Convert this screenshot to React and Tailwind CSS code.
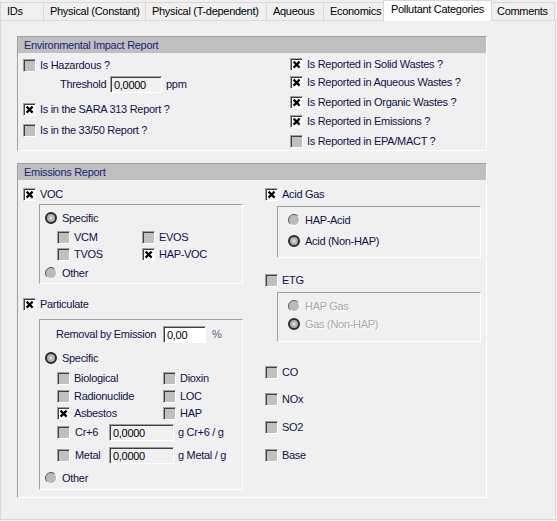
const tabs = [
  { label: 'IDs', w: 'w-[43px]' },
  { label: 'Physical (Constant)', w: 'w-[102px]' },
  { label: 'Physical (T-dependent)', w: 'w-[121px]' },
  { label: 'Aqueous', w: 'w-[57px]' },
  { label: 'Economics', w: 'w-[62px] border-r' },
  { label: 'Pollutant Categories', active: true },
  { label: 'Comments', w: 'w-[65px] border-r' },
];

const Check = ({ on }) => (
  <span
    className={`w-[13px] h-[13px] shrink-0 border border-t-[#a0a0a0] border-l-[#a0a0a0] border-b-white border-r-white shadow-[inset_1px_1px_0_#404040] flex items-center justify-center ${on ? 'bg-white' : 'bg-[#c0c0c0]'}`}
  >
    {on && (
      <svg width="11" height="11" viewBox="0 0 11 11">
        <path d="M2.6 2.6 L8.6 8.6 M8.6 2.6 L2.6 8.6" stroke="#000" strokeWidth="2.2" />
      </svg>
    )}
  </span>
);

const Radio = ({ on }) =>
  on ? (
    <svg width="12" height="12" viewBox="0 0 12 12" className="shrink-0">
      <circle cx="6" cy="6" r="5" fill="#b0b0b0" stroke="#2a2a2a" strokeWidth="2" />
      <circle cx="6" cy="6" r="1.8" fill="#d8d8d8" />
    </svg>
  ) : (
    <svg width="12" height="12" viewBox="0 0 12 12" className="shrink-0">
      <circle cx="6" cy="6" r="5.5" fill="#bababa" />
      <path d="M2.1 9.9 A5.5 5.5 0 0 1 9.9 2.1" fill="none" stroke="#5a5a5a" />
      <path d="M9.9 2.1 A5.5 5.5 0 0 1 2.1 9.9" fill="none" stroke="#ffffff" />
    </svg>
  );

const Field = ({ value, className }) => (
  <span
    className={`h-[17px] shrink-0 border border-t-[#a0a0a0] border-l-[#a0a0a0] border-b-white border-r-white shadow-[inset_1px_1px_0_#404040] pl-[3px] pt-px flex items-center text-black ${className}`}
  >
    {value}
  </span>
);

const CheckRow = ({ on, label, className = '' }) => (
  <div className={`h-[16px] flex items-center gap-[4px] whitespace-nowrap ${className}`}>
    <Check on={on} />
    <span>{label}</span>
  </div>
);

const RadioRow = ({ on, label, className = '', dim }) => (
  <div className={`h-[16px] flex items-center gap-[5px] whitespace-nowrap ${className}`}>
    <Radio on={on} />
    <span className={dim ? 'text-[#a8a8a8] [text-shadow:1px_1px_0_#fff]' : ''}>{label}</span>
  </div>
);

const Frame = ({ title, className, children }) => (
  <div className={`w-[470px] flex flex-col border border-t-[#a0a0a0] border-l-[#a0a0a0] border-b-white border-r-white ${className}`}>
    <div className="h-[16px] bg-[#bfbfbf] pl-[6px] flex items-center text-[#1c1c78]">{title}</div>
    <div className="flex flex-1">{children}</div>
  </div>
);

const Group = ({ className, children }) => (
  <div className={`w-[204px] flex flex-col border border-t-[#a0a0a0] border-l-[#a0a0a0] border-b-white border-r-white ${className}`}>
    {children}
  </div>
);

export default function App() {
  return (
    <div className="w-[557px] h-[521px] bg-[#f0f0f0] overflow-hidden font-['Liberation_Sans',Arial,sans-serif] text-[11px] tracking-[-0.3px] text-[#10104a]">
      {/* Tabs */}
      <div className="relative z-10 h-[20px] flex items-end">
        {tabs.map((t) =>
          t.active ? (
            <div
              key={t.label}
              className="w-[109px] h-[21px] -mb-px -mx-[2px] relative z-10 bg-white border border-b-0 border-[#d9d9d9] flex items-center justify-center pb-[3px] text-black whitespace-nowrap"
            >
              {t.label}
            </div>
          ) : (
            <div
              key={t.label}
              className={`${t.w} h-[18px] border-t border-l border-[#d9d9d9] flex items-center pl-[6px] text-black whitespace-nowrap`}
            >
              {t.label}
            </div>
          )
        )}
      </div>

      {/* Page */}
      <div className="w-[556px] h-[500px] border border-[#d9d9d9] pl-[16px] pt-[15px] flex flex-col">
        <Frame title="Environmental Impact Report" className="h-[115px]">
          <div className="w-[272px] pl-[5px] pt-[4px] flex flex-col">
            <CheckRow label="Is Hazardous ?" />
            <div className="h-[17px] mt-[3px] ml-[37px] flex items-center whitespace-nowrap">
              <span className="w-[50px]">Threshold</span>
              <Field value="0,0000" className="w-[52px] bg-[#f0f0f0]" />
              <span className="ml-[4px]">ppm</span>
            </div>
            <CheckRow on label="Is in the SARA 313 Report ?" className="mt-[8px]" />
            <CheckRow label="Is in the 33/50 Report ?" className="mt-[5px]" />
          </div>
          <div className="pt-[3px] flex flex-col">
            <CheckRow on label="Is Reported in Solid Wastes ?" />
            <CheckRow on label="Is Reported in Aqueous Wastes ?" className="mt-[2px]" />
            <CheckRow on label="Is Reported in Organic Wastes ?" className="mt-[4px]" />
            <CheckRow on label="Is Reported in Emissions ?" className="mt-[3px]" />
            <CheckRow label="Is Reported in EPA/MACT ?" className="mt-[4px]" />
          </div>
        </Frame>

        <Frame title="Emissions Report" className="h-[335px] mt-[12px]">
          {/* left column */}
          <div className="w-[247px] pl-[5px] pt-[6px] flex flex-col items-start">
            <CheckRow on label="VOC" />
            <Group className="h-[80px] mt-[2px] ml-[16px] pl-[5px] pt-[5px]">
              <RadioRow on label="Specific" />
              <div className="flex mt-[3px] ml-[12px]">
                <CheckRow label="VCM" className="w-[85px]" />
                <CheckRow label="EVOS" />
              </div>
              <div className="flex mt-[1px] ml-[12px]">
                <CheckRow label="TVOS" className="w-[85px]" />
                <CheckRow on label="HAP-VOC" />
              </div>
              <RadioRow label="Other" className="mt-[3px]" />
            </Group>

            <CheckRow on label="Particulate" className="mt-[12px]" />
            <Group className="h-[171px] mt-[7px] ml-[16px] pl-[5px] pt-[6px]">
              <div className="h-[17px] flex items-center whitespace-nowrap pl-[11px]">
                <span className="w-[107px]">Removal by Emission</span>
                <Field value="0,00" className="w-[43px] bg-white" />
                <span className="ml-[6px] text-[#5a5a8a]">%</span>
              </div>
              <RadioRow on label="Specific" className="mt-[7px]" />
              <div className="flex mt-[4px] ml-[12px]">
                <CheckRow label="Biological" className="w-[106px]" />
                <CheckRow label="Dioxin" />
              </div>
              <div className="flex mt-[2px] ml-[12px]">
                <CheckRow label="Radionuclide" className="w-[106px]" />
                <CheckRow label="LOC" />
              </div>
              <div className="flex mt-[1px] ml-[12px]">
                <CheckRow on label="Asbestos" className="w-[106px]" />
                <CheckRow label="HAP" />
              </div>
              <div className="h-[17px] flex items-center mt-[3px] ml-[12px] whitespace-nowrap">
                <Check />
                <span className="w-[34px] ml-[5px]">Cr+6</span>
                <Field value="0,0000" className="w-[65px] bg-[#f0f0f0]" />
                <span className="ml-[4px]">g Cr+6 / g</span>
              </div>
              <div className="h-[17px] flex items-center mt-[6px] ml-[12px] whitespace-nowrap">
                <Check />
                <span className="w-[34px] ml-[5px]">Metal</span>
                <Field value="0,0000" className="w-[65px] bg-[#f0f0f0]" />
                <span className="ml-[4px]">g Metal / g</span>
              </div>
              <RadioRow label="Other" className="mt-[6px]" />
            </Group>
          </div>

          {/* right column */}
          <div className="pt-[6px] flex flex-col items-start">
            <CheckRow on label="Acid Gas" />
            <Group className="h-[52px] mt-[4px] ml-[12px] pl-[10px] pt-[5px]">
              <RadioRow label="HAP-Acid" />
              <RadioRow on label="Acid (Non-HAP)" className="mt-[5px]" />
            </Group>
            <CheckRow label="ETG" className="mt-[14px]" />
            <Group className="h-[50px] mt-[4px] ml-[12px] pl-[10px] pt-[5px]">
              <RadioRow dim label="HAP Gas" />
              <RadioRow dim on label="Gas (Non-HAP)" className="mt-[2px]" />
            </Group>
            <CheckRow label="CO" className="mt-[22px]" />
            <CheckRow label="NOx" className="mt-[11px]" />
            <CheckRow label="SO2" className="mt-[12px]" />
            <CheckRow label="Base" className="mt-[12px]" />
          </div>
        </Frame>
      </div>
    </div>
  );
}
